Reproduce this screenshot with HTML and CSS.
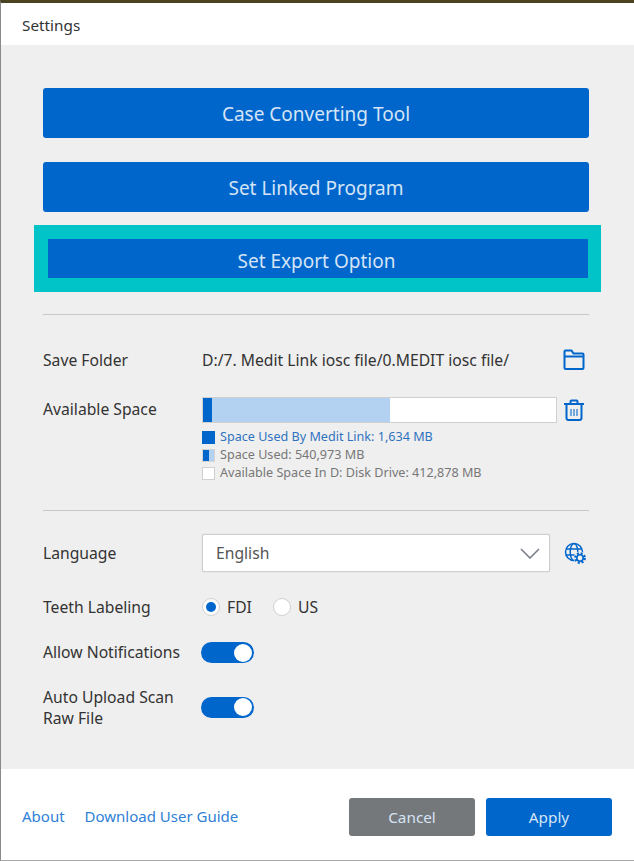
FILE: index.html
```html
<!DOCTYPE html>
<html lang="en">
<head>
    <meta charset="UTF-8">
    <title>Settings</title>
    <link rel="stylesheet" href="styles.css">
</head>
<body>
    <div class="window">
        <div class="title-bar">Settings</div>

        <div class="content">
            <button class="btn-main">Case Converting Tool</button>
            <button class="btn-main">Set Linked Program</button>
            <div class="highlight">
                <button class="btn-main btn-flat">Set Export Option</button>
            </div>

            <hr class="divider divider-first">

            <div class="row row-folder">
                <div class="row-label">Save Folder</div>
                <div class="folder-path">D:/7. Medit Link iosc file/0.MEDIT iosc file/</div>
                <svg class="icon" width="22" height="22" viewBox="0 0 22 22" fill="none" stroke="#0066cc" stroke-width="2">
                    <path d="M1.5 19V2.5a1 1 0 0 1 1-1h6l2 3h9a1 1 0 0 1 1 1V19a1 1 0 0 1-1 1h-17a1 1 0 0 1-1-1z"/>
                    <path d="M1.5 7.5h19"/>
                </svg>
            </div>

            <div class="row row-space">
                <div class="row-label">Available Space</div>
                <div class="space-info">
                    <div class="bar-line">
                        <div class="space-bar">
                            <div class="bar-link"></div>
                            <div class="bar-used"></div>
                        </div>
                        <svg class="icon" width="22" height="22" viewBox="0 0 22 22" fill="none" stroke="#0066cc" stroke-width="2">
                            <path d="M1 5h20"/>
                            <path d="M7.5 5V2.5a1 1 0 0 1 1-1h5a1 1 0 0 1 1 1V5"/>
                            <path d="M3.5 5v14a2 2 0 0 0 2 2h11a2 2 0 0 0 2-2V5"/>
                            <path d="M8 10v7M11 10v7M14 10v7" stroke-width="1.5" stroke-opacity="0.7"/>
                        </svg>
                    </div>
                    <ul class="legend">
                        <li class="legend-link"><span class="swatch swatch-link"></span>Space Used By Medit Link: 1,634 MB</li>
                        <li><span class="swatch swatch-used"></span>Space Used: 540,973 MB</li>
                        <li><span class="swatch swatch-free"></span>Available Space In D: Disk Drive: 412,878 MB</li>
                    </ul>
                </div>
            </div>

            <hr class="divider divider-second">

            <div class="row row-language">
                <div class="row-label">Language</div>
                <div class="select">
                    <span>English</span>
                    <svg width="20" height="11" viewBox="0 0 20 11" fill="none" stroke="#7b8088" stroke-width="1.6">
                        <path d="M1 1l9 9 9-9"/>
                    </svg>
                </div>
                <svg class="icon-globe" width="22" height="22" viewBox="0 0 22 22" fill="none" stroke="#0066cc" stroke-width="1.5">
                    <circle cx="10" cy="10" r="8.5"/>
                    <ellipse cx="10" cy="10" rx="3.8" ry="8.5"/>
                    <path d="M2 7h16M2 13h16"/>
                    <circle cx="16" cy="16" r="6.5" fill="#efefef" stroke="none"/>
                    <circle cx="16" cy="16" r="4.7" stroke-width="2.4" stroke-dasharray="2 1.7"/>
                    <circle cx="16" cy="16" r="3.2" stroke-width="1.6"/>
                </svg>
            </div>

            <div class="row row-teeth">
                <div class="row-label">Teeth Labeling</div>
                <label class="radio"><span class="radio-dot radio-on"></span>FDI</label>
                <label class="radio"><span class="radio-dot"></span>US</label>
            </div>

            <div class="row row-notify">
                <div class="row-label">Allow Notifications</div>
                <span class="toggle"><span class="knob"></span></span>
            </div>

            <div class="row row-upload">
                <div class="row-label">Auto Upload Scan<br>Raw File</div>
                <span class="toggle"><span class="knob"></span></span>
            </div>
        </div>

        <div class="footer">
            <a class="link" href="#">About</a>
            <a class="link" href="#">Download User Guide</a>
            <button class="btn-small btn-cancel">Cancel</button>
            <button class="btn-small btn-apply">Apply</button>
        </div>
    </div>
</body>
</html>
```

FILE: styles.css
```css
* {
    box-sizing: border-box;
    margin: 0;
    padding: 0;
}

body {
    font-family: "Noto Sans", "Open Sans", sans-serif;
    background: #fff;
    color: #333;
    font-size: 15.7px;
}

.window {
    height: 861px;
    display: flex;
    flex-direction: column;
    border-top: 3px solid #4a4322;
    border-left: 1px solid #8a8a8a;
    border-bottom: 1px solid #a8a8a8;
}

.title-bar {
    height: 42px;
    padding: 13px 0 0 21px;
    background: #fff;
    font-size: 15.3px;
    line-height: 19px;
}

.content {
    flex: 1;
    background: #efefef;
    padding: 43px 45px 0 42px;
}

.btn-main {
    display: block;
    width: 100%;
    height: 50px;
    margin-bottom: 24px;
    padding-top: 2px;
    background: #0066cc;
    color: #d5e4f6;
    border: none;
    border-radius: 3px;
    font-family: inherit;
    font-size: 19px;
}

.highlight {
    margin: -11px -12px 0 -9px;
    border: 14px solid #00c4c8;
    border-right-width: 13px;
}

.btn-flat {
    height: 39px;
    margin: 0;
    padding: 5px 3px 0 0;
    border-radius: 0;
}

.divider {
    border: none;
    border-top: 1px solid #c8c8c8;
}

.divider-first {
    margin-top: 22px;
}

.divider-second {
    margin-top: 28px;
}

.row {
    display: flex;
    align-items: center;
}

.row-label {
    width: 159px;
    flex-shrink: 0;
    line-height: 21px;
}

.row-folder {
    margin-top: 34px;
    margin-right: 4px;
    height: 22px;
}

.folder-path {
    flex: 1;
}

.icon {
    flex-shrink: 0;
}

.row-space {
    margin-top: 26px;
    margin-right: 4px;
    align-items: flex-start;
}

.row-space .row-label {
    margin-top: 2px;
}

.space-info {
    flex: 1;
}

.bar-line {
    display: flex;
    align-items: center;
    gap: 6px;
}

.space-bar {
    flex: 1;
    height: 26px;
    display: flex;
    background: #fff;
    border: 1px solid #d0d0d0;
}

.bar-link {
    width: 9px;
    background: #0066cc;
}

.bar-used {
    width: 178px;
    background: #b3d1f0;
}

.legend {
    list-style: none;
    margin-top: 5px;
    font-size: 12.6px;
    line-height: 18px;
    color: #777;
}

.legend-link {
    color: #2f73c0;
}

.legend li {
    display: flex;
    align-items: center;
    gap: 5px;
}

.swatch {
    width: 13px;
    height: 13px;
}

.swatch-link {
    background: #0066cc;
}

.swatch-used {
    background: linear-gradient(90deg, #0066cc 55%, #b3d1f0 55%);
    border: 1px solid #d4d4d4;
}

.swatch-free {
    background: #fff;
    border: 1px solid #d0d0d0;
}

.row-language {
    margin-top: 23px;
}

.select {
    width: 348px;
    height: 38px;
    display: flex;
    align-items: center;
    justify-content: space-between;
    padding: 0 9px 0 13px;
    background: #fff;
    border: 1px solid #d0d0d0;
    border-radius: 2px;
    box-shadow: 0 0 1px #bbb;
    color: #555;
}

.icon-globe {
    margin-left: 14px;
}

.row-teeth {
    margin-top: 25px;
    height: 20px;
}

.radio {
    display: flex;
    align-items: center;
    gap: 7px;
    margin-right: 21px;
}

.radio-dot {
    width: 18px;
    height: 18px;
    border-radius: 50%;
    background: #fff;
    border: 1px solid #d0d0d0;
    display: flex;
    align-items: center;
    justify-content: center;
}

.radio-on::after {
    content: "";
    width: 10px;
    height: 10px;
    border-radius: 50%;
    background: #0066cc;
}

.row-notify {
    margin-top: 25px;
    height: 21px;
}

.row-notify .row-label,
.row-upload .row-label {
    width: 158px;
}

.row-upload {
    margin-top: 24px;
    height: 42px;
}

.row-upload .toggle {
    margin-bottom: 2px;
}

.toggle {
    width: 53px;
    height: 21px;
    display: flex;
    align-items: center;
    justify-content: flex-end;
    padding-right: 2px;
    background: #0066cc;
    border-radius: 11px;
}

.knob {
    width: 18px;
    height: 18px;
    border-radius: 50%;
    background: #fff;
}

.footer {
    height: 91px;
    display: flex;
    align-items: flex-start;
    padding: 29px 22px 0 21px;
    background: #fff;
}

.link {
    color: #2f7fd6;
    font-size: 15px;
    text-decoration: none;
    margin-right: 20px;
    margin-top: 8px;
}

.btn-small {
    width: 126px;
    height: 38px;
    border: none;
    border-radius: 3px;
    color: #d5e4f6;
    font-family: inherit;
    font-size: 15.3px;
}

.btn-cancel {
    margin-left: auto;
    margin-right: 11px;
    background: #75787b;
}

.btn-apply {
    background: #0066cc;
}
```
